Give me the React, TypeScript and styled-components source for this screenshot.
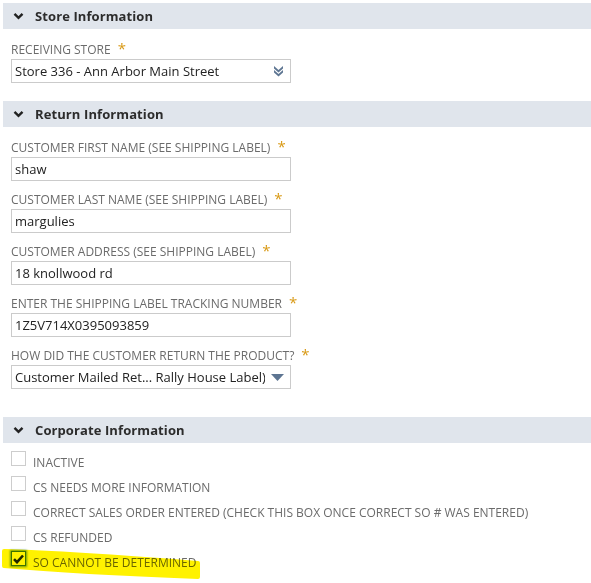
import React from 'react';
import styled, { createGlobalStyle } from 'styled-components';

const GlobalStyle = createGlobalStyle`
  html, body {
    margin: 0;
    padding: 0;
    background: #ffffff;
  }
  body {
    font-family: "Open Sans", "Liberation Sans", sans-serif;
  }
`;

const Page = styled.div`
  width: 591px;
  height: 583px;
  padding: 3px 0 0 3px;
  box-sizing: border-box;
  overflow: hidden;
`;

const Section = styled.section<{ $after: number }>`
  margin-bottom: ${(p) => p.$after}px;
`;

const SectionHeader = styled.div`
  height: 26px;
  display: flex;
  align-items: center;
  gap: 11px;
  padding-left: 10px;
  background: #e0e5ec;
  color: #2c2c2c;
  font-size: 13px;
  font-weight: 700;
  letter-spacing: 0.1px;
`;

const Chevron = styled.svg`
  width: 11px;
  height: 8px;
`;

const Fields = styled.div`
  padding: 2px 0 0 8px;
`;

const Field = styled.div`
  width: 280px;
`;

const Label = styled.div`
  height: 28px;
  display: flex;
  align-items: flex-end;
  padding-bottom: 1px;
  box-sizing: border-box;
  color: #6b6b6b;
  font-size: 12px;
  text-transform: uppercase;
  white-space: nowrap;
`;

const Star = styled.span`
  color: #d99a17;
  font-size: 15px;
  line-height: 12px;
  margin-left: 7px;
  align-self: flex-start;
  margin-top: 11px;
`;

const Box = styled.div<{ $select?: boolean }>`
  height: 24px;
  box-sizing: border-box;
  border: 1px solid #cbcbcb;
  display: flex;
  align-items: center;
  padding: 0 ${(p) => (p.$select ? '6px' : '4px')} 0 3px;
  color: #222222;
  font-size: 13px;
  background: #ffffff;
`;

const Value = styled.span`
  flex: 1;
  overflow: hidden;
  white-space: nowrap;
`;

const ArrowIcon = styled.svg`
  flex: none;
  margin-left: 6px;
`;

const Checks = styled.div`
  position: relative;
  padding: 6px 0 0 8px;
`;

const CheckRow = styled.label`
  height: 25px;
  display: flex;
  align-items: center;
  gap: 7px;
  color: #6b6b6b;
  font-size: 12px;
  position: relative;
  z-index: 1;
`;

const CheckBox = styled.span<{ $checked?: boolean }>`
  width: 15px;
  height: 15px;
  box-sizing: border-box;
  border: 1px solid ${(p) => (p.$checked ? '#3c78d0' : '#cdcdcd')};
  box-shadow: ${(p) => (p.$checked ? '0 0 2px 1px #6fa3ea' : 'none')};
  background: #ffffff;
  display: flex;
  align-items: center;
  justify-content: center;
  margin-top: -6px;
`;

const CheckText = styled.span`
  margin-top: 2px;
`;

/* marker stroke drawn over the last checkbox row */
const Highlight = styled.svg`
  position: absolute;
  left: -3px;
  top: 100px;
  z-index: 2;
  mix-blend-mode: multiply;
  pointer-events: none;
`;

const ChevronDown = () => (
  <Chevron viewBox="0 0 11 8">
    <path d="M1.5 1.8 L5.5 5.8 L9.5 1.8" fill="none" stroke="#222" strokeWidth="2.4" />
  </Chevron>
);

const DoubleArrow = () => (
  <ArrowIcon width="11" height="12" viewBox="0 0 11 12">
    <path d="M1 1 L5.5 5 L10 1 L10 3.5 L5.5 7.5 L1 3.5 Z" fill="#5d7592" />
    <path d="M1 5 L5.5 9 L10 5 L10 7.5 L5.5 11.5 L1 7.5 Z" fill="#5d7592" />
  </ArrowIcon>
);

const Triangle = () => (
  <ArrowIcon width="13" height="7" viewBox="0 0 13 7">
    <path d="M0 0 L13 0 L6.5 7 Z" fill="#5d7592" />
  </ArrowIcon>
);

type FieldDef = { label: string; value: string; kind?: 'store' | 'list' };

const returnFields: FieldDef[] = [
  { label: 'Customer First Name (see shipping label)', value: 'shaw' },
  { label: 'Customer Last Name (see shipping label)', value: 'margulies' },
  { label: 'Customer Address (see shipping label)', value: '18 knollwood rd' },
  { label: 'Enter the shipping label tracking number', value: '1Z5V714X0395093859' },
  { label: 'How did the customer return the product?', value: 'Customer Mailed Ret... Rally House Label)', kind: 'list' },
];

const corporateChecks = [
  { label: 'Inactive', checked: false },
  { label: 'CS Needs More Information', checked: false },
  { label: 'Correct Sales Order Entered (check this box once correct SO # was entered)', checked: false },
  { label: 'CS Refunded', checked: false },
  { label: 'SO Cannot Be Determined', checked: true },
];

const FormField: React.FC<FieldDef> = ({ label, value, kind }) => (
  <Field>
    <Label>
      {label}
      <Star>*</Star>
    </Label>
    <Box $select={!!kind}>
      <Value>{value}</Value>
      {kind === 'store' && <DoubleArrow />}
      {kind === 'list' && <Triangle />}
    </Box>
  </Field>
);

export default function App() {
  return (
    <Page>
      <GlobalStyle />
      <Section $after={18}>
        <SectionHeader>
          <ChevronDown />
          Store Information
        </SectionHeader>
        <Fields>
          <FormField label="Receiving Store" value="Store 336 - Ann Arbor Main Street" kind="store" />
        </Fields>
      </Section>

      <Section $after={28}>
        <SectionHeader>
          <ChevronDown />
          Return Information
        </SectionHeader>
        <Fields>
          {returnFields.map((f) => (
            <FormField key={f.label} {...f} />
          ))}
        </Fields>
      </Section>

      <Section $after={0}>
        <SectionHeader>
          <ChevronDown />
          Corporate Information
        </SectionHeader>
        <Checks>
          {corporateChecks.map((c) => (
            <CheckRow key={c.label}>
              <CheckBox $checked={c.checked}>
                {c.checked && (
                  <svg width="11" height="10" viewBox="0 0 11 10">
                    <path d="M1 5.2 L4 8.2 L10 1.5" fill="none" stroke="#1f2a10" strokeWidth="2.6" />
                  </svg>
                )}
              </CheckBox>
              <CheckText>{c.label.toUpperCase()}</CheckText>
            </CheckRow>
          ))}
          <Highlight width="202" height="38" viewBox="0 0 202 38">
            <path
              d="M4 8 C 40 9, 110 13, 198 20 L 198 34 C 120 31, 50 27, 4 23 Z"
              fill="#fff200"
              stroke="#fff200"
              strokeWidth="4"
              strokeLinejoin="round"
            />
          </Highlight>
        </Checks>
      </Section>
    </Page>
  );
}
